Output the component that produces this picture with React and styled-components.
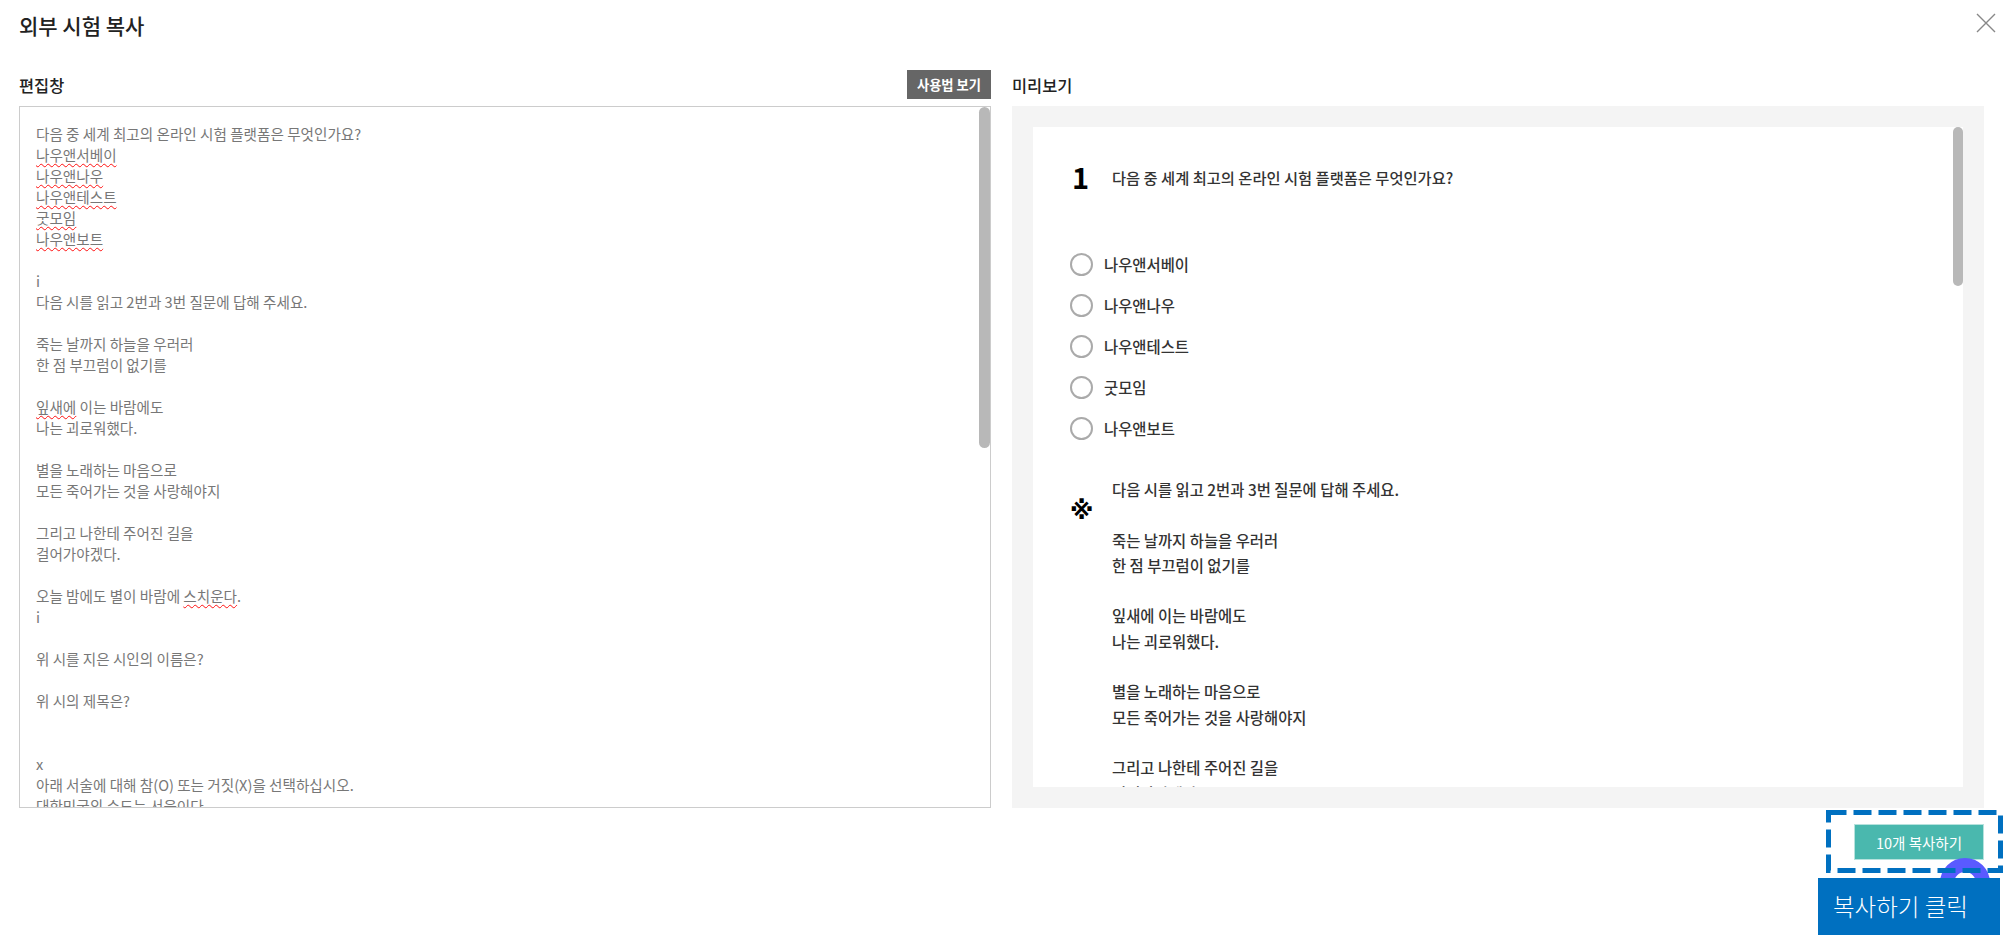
import React from 'react'
import styled, { createGlobalStyle } from 'styled-components'

const options = ['나우앤서베이', '나우앤나우', '나우앤테스트', '굿모임', '나우앤보트']

const passage = [
    '다음 시를 읽고 2번과 3번 질문에 답해 주세요.',
    '',
    '죽는 날까지 하늘을 우러러',
    '한 점 부끄럼이 없기를',
    '',
    '잎새에 이는 바람에도',
    '나는 괴로워했다.',
    '',
    '별을 노래하는 마음으로',
    '모든 죽어가는 것을 사랑해야지',
    '',
    '그리고 나한테 주어진 길을',
    '걸어가야겠다.',
]

function App() {
    return (
        <Page>
            <GlobalStyle />
            <Header>
                <Title>외부 시험 복사</Title>
                <CloseButton aria-label="닫기">
                    <svg width="20" height="20" viewBox="0 0 20 20">
                        <path d="M1 1 L19 19 M19 1 L1 19" stroke="#888" strokeWidth="1.4" fill="none" />
                    </svg>
                </CloseButton>
            </Header>

            <Columns>
                <Column>
                    <ColumnHead>
                        <Label>편집창</Label>
                        <GuideButton>사용법 보기</GuideButton>
                    </ColumnHead>
                    <Editor>
                        <EditorLine>다음 중 세계 최고의 온라인 시험 플랫폼은 무엇인가요?</EditorLine>
                        <EditorLine><Typo>나우앤서베이</Typo></EditorLine>
                        <EditorLine><Typo>나우앤나우</Typo></EditorLine>
                        <EditorLine><Typo>나우앤테스트</Typo></EditorLine>
                        <EditorLine><Typo>굿모임</Typo></EditorLine>
                        <EditorLine><Typo>나우앤보트</Typo></EditorLine>
                        <EditorLine />
                        <EditorLine>i</EditorLine>
                        <EditorLine>다음 시를 읽고 2번과 3번 질문에 답해 주세요.</EditorLine>
                        <EditorLine />
                        <EditorLine>죽는 날까지 하늘을 우러러</EditorLine>
                        <EditorLine>한 점 부끄럼이 없기를</EditorLine>
                        <EditorLine />
                        <EditorLine><Typo>잎새에</Typo> 이는 바람에도</EditorLine>
                        <EditorLine>나는 괴로워했다.</EditorLine>
                        <EditorLine />
                        <EditorLine>별을 노래하는 마음으로</EditorLine>
                        <EditorLine>모든 죽어가는 것을 사랑해야지</EditorLine>
                        <EditorLine />
                        <EditorLine>그리고 나한테 주어진 길을</EditorLine>
                        <EditorLine>걸어가야겠다.</EditorLine>
                        <EditorLine />
                        <EditorLine>오늘 밤에도 별이 바람에 <Typo>스치운다</Typo>.</EditorLine>
                        <EditorLine>i</EditorLine>
                        <EditorLine />
                        <EditorLine>위 시를 지은 시인의 이름은?</EditorLine>
                        <EditorLine />
                        <EditorLine>위 시의 제목은?</EditorLine>
                        <EditorLine />
                        <EditorLine />
                        <EditorLine>x</EditorLine>
                        <EditorLine>아래 서술에 대해 참(O) 또는 거짓(X)을 선택하십시오.</EditorLine>
                        <EditorLine>대한민국의 수도는 서울이다.</EditorLine>
                        <EditorThumb />
                    </Editor>
                </Column>

                <Column>
                    <ColumnHead>
                        <Label>미리보기</Label>
                    </ColumnHead>
                    <Preview>
                        <Sheet>
                            <QuestionRow>
                                <QuestionNumber>1</QuestionNumber>
                                <QuestionText>다음 중 세계 최고의 온라인 시험 플랫폼은 무엇인가요?</QuestionText>
                            </QuestionRow>
                            <OptionList>
                                {options.map(option => (
                                    <OptionRow key={option}>
                                        <Radio />
                                        <OptionText>{option}</OptionText>
                                    </OptionRow>
                                ))}
                            </OptionList>
                            <PassageRow>
                                <PassageMark>※</PassageMark>
                                <PassageText>
                                    {passage.map((line, i) => (
                                        <PassageLine key={i}>{line}</PassageLine>
                                    ))}
                                </PassageText>
                            </PassageRow>
                            <SheetThumb />
                        </Sheet>
                    </Preview>
                </Column>
            </Columns>

            <Footer>
                <CopyButton>10개 복사하기</CopyButton>
            </Footer>

            <ChatBubble />
            <DashedMark width="177" height="63" viewBox="0 0 177 63">
                <rect x="2.5" y="2.5" width="172" height="58" fill="none" stroke="#0070c0" strokeWidth="5" strokeDasharray="18 7" />
            </DashedMark>
            <Callout>복사하기 클릭</Callout>
        </Page>
    )
}

export default App

const GlobalStyle = createGlobalStyle`
    html, body {
        margin: 0;
        padding: 0;
        background: #fff;
    }
    * {
        box-sizing: border-box;
    }
`

const Page = styled.div`
    position: relative;
    width: 2003px;
    height: 935px;
    padding: 0 19px;
    overflow: hidden;
    background: #fff;
    font-family: "Noto Sans CJK KR", "Noto Sans", sans-serif;
    color: #333;
`

const Header = styled.div`
    display: flex;
    justify-content: space-between;
    align-items: center;
    height: 50px;
`

const Title = styled.h1`
    margin: 0;
    font-size: 21px;
    font-weight: 500;
    color: #222;
`

const CloseButton = styled.button`
    display: flex;
    margin: 0 -12px 5px 0;
    padding: 0;
    border: 0;
    background: none;
`

const Columns = styled.div`
    display: grid;
    grid-template-columns: 972px 972px;
    gap: 21px;
    margin-top: 20px;
`

const Column = styled.div`
    display: flex;
    flex-direction: column;
`

const ColumnHead = styled.div`
    display: flex;
    justify-content: space-between;
    align-items: flex-start;
    height: 36px;
`

const Label = styled.div`
    font-size: 16.4px;
    font-weight: 500;
    line-height: 30px;
    color: #222;
`

const GuideButton = styled.button`
    width: 84px;
    height: 29px;
    padding: 0;
    border: 0;
    background: #666;
    color: #fff;
    font-family: inherit;
    font-size: 13.3px;
    font-weight: 700;
`

const Editor = styled.div`
    position: relative;
    height: 702px;
    padding: 16px 16px 0;
    border: 1px solid #ccc;
    overflow: hidden;
    background: #fff;
`

const EditorLine = styled.div`
    height: 21px;
    font-size: 14.6px;
    line-height: 21px;
    color: #777;
    white-space: pre;
`

const Typo = styled.span`
    text-decoration: underline wavy #f11;
    text-decoration-thickness: 1.3px;
    text-underline-offset: 2px;
`

const EditorThumb = styled.div`
    position: absolute;
    top: 0;
    right: 0;
    width: 11px;
    height: 341px;
    border-radius: 6px;
    background: #b8b8b8;
`

const Preview = styled.div`
    height: 702px;
    padding: 21px;
    background: #f4f4f4;
`

const Sheet = styled.div`
    position: relative;
    height: 660px;
    padding: 0 0 0 37px;
    overflow: hidden;
    background: #fff;
`

const QuestionRow = styled.div`
    display: flex;
    align-items: center;
    height: 100px;
`

const QuestionNumber = styled.div`
    width: 42px;
    padding: 0 0 3px 2px;
    font-size: 29px;
    font-weight: 700;
    color: #000;
`

const QuestionText = styled.div`
    padding-bottom: 1px;
    font-size: 15.3px;
    font-weight: 500;
`

const OptionList = styled.div`
    margin-top: 17px;
`

const OptionRow = styled.div`
    display: flex;
    align-items: center;
    gap: 11px;
    height: 41px;
`

const Radio = styled.span`
    width: 23px;
    height: 23px;
    border: 2px solid #aaa;
    border-radius: 50%;
`

const OptionText = styled.span`
    padding-bottom: 2px;
    font-size: 15.4px;
    font-weight: 500;
`

const PassageRow = styled.div`
    display: flex;
    margin-top: 28px;
`

const PassageMark = styled.div`
    width: 42px;
    padding-top: 19px;
    font-family: "DejaVu Sans", "Noto Sans CJK KR", sans-serif;
    font-size: 24px;
    line-height: 30px;
    font-weight: 700;
    color: #000;
`

const PassageText = styled.div`
    font-size: 15.4px;
    font-weight: 500;
`

const PassageLine = styled.div`
    height: 25.3px;
    line-height: 25.3px;
`

const SheetThumb = styled.div`
    position: absolute;
    top: 0;
    right: 0;
    width: 10px;
    height: 159px;
    border-radius: 6px;
    background: #b8b8b8;
`

const Footer = styled.div`
    display: flex;
    justify-content: flex-end;
    padding-top: 16px;
`

const CopyButton = styled.button`
    width: 130px;
    height: 36px;
    padding: 0;
    border: 1px solid #b6e2dd;
    background: #4ab8ae;
    color: #fff;
    font-family: inherit;
    font-size: 14.5px;
`

const ChatBubble = styled.div`
    position: absolute;
    left: 1940px;
    top: 858px;
    width: 50px;
    height: 50px;
    border: 14px solid #5a5aff;
    border-radius: 50%;
    background: #fff;
`

const DashedMark = styled.svg`
    position: absolute;
    left: 1826px;
    top: 810px;
`

const Callout = styled.div`
    position: absolute;
    left: 1818px;
    top: 878px;
    display: flex;
    align-items: center;
    width: 182px;
    height: 57px;
    padding: 0 0 2px 15px;
    background: #0070c0;
    color: #fff;
    font-size: 23.5px;
    font-weight: 300;
`
